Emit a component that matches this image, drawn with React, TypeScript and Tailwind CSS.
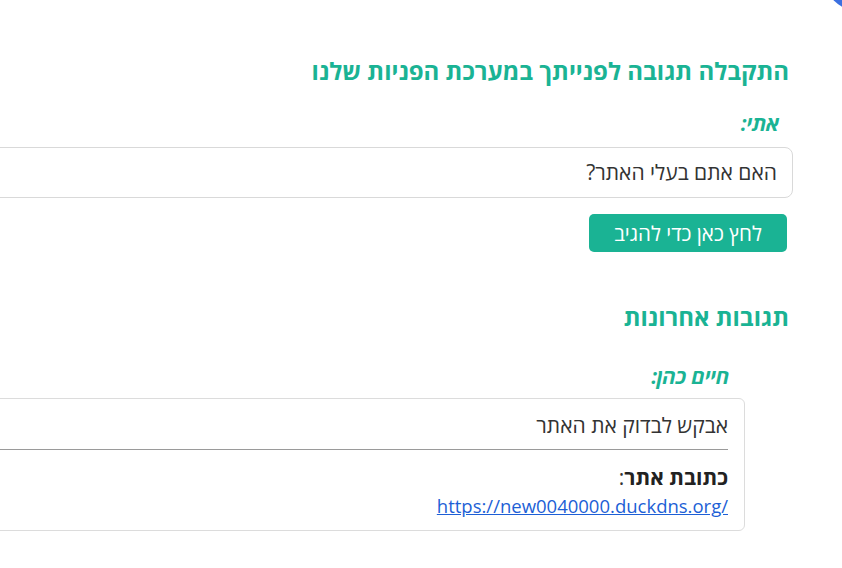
import React from "react";

export default function App() {
  return (
    <div
      dir="rtl"
      className="relative w-[842px] h-[568px] overflow-hidden bg-white text-[#333]"
      style={{ fontFamily: '"Open Sans", "DejaVu Sans", sans-serif' }}
    >
      <div className="absolute top-[-55px] right-[-49px] w-[66px] h-[66px] rounded-full bg-[#3b6fe0]" />
      <div className="w-[1200px] pr-[49px] pt-[55px]">
        <h2 className="pr-[4px] text-[24px] leading-[32px] font-bold text-[#1ab394]">
          התקבלה תגובה לפנייתך במערכת הפניות שלנו
        </h2>
        <div className="mt-[24px] pr-[14px] text-[20.5px] leading-[24px] font-bold italic text-[#1ab394]">
          אתי:
        </div>
        <div className="mt-[12px] h-[51px] border border-[#d9d9d9] rounded-[8px] pr-[15px] flex items-center text-[21px]">
          האם אתם בעלי האתר?
        </div>
        <div className="mt-[16px] pr-[6px]">
          <button className="w-[198px] h-[38px] rounded-[5px] bg-[#1ab394] text-white text-[20.5px] leading-[38px]">
            לחץ כאן כדי להגיב
          </button>
        </div>
        <h2 className="mt-[49px] pr-[4px] text-[24px] leading-[32px] font-bold text-[#1ab394]">
          תגובות אחרונות
        </h2>
        <div className="mt-[31px] pr-[64px] text-[20.5px] leading-[24px] font-bold italic text-[#1ab394]">
          חיים כהן:
        </div>
        <div className="mt-[10px] mr-[48px] border border-[#dcdcdc] rounded-[6px] pr-[16px] pt-[13px] pb-[12px]">
          <div className="text-[21px] leading-[26px]">אבקש לבדוק את האתר</div>
          <div className="mt-[11px] border-t border-[#9a9a9a]" />
          <div className="mt-[15px] text-[21px] leading-[24px]">
            <span className="font-bold text-[#222]">כתובת אתר</span>:
          </div>
          <div className="mt-[5px] text-[18.5px] leading-[24px]">
            <a href="#" dir="ltr" className="text-[#1d5fd6] underline">
              https://new0040000.duckdns.org/
            </a>
          </div>
        </div>
      </div>
    </div>
  );
}
